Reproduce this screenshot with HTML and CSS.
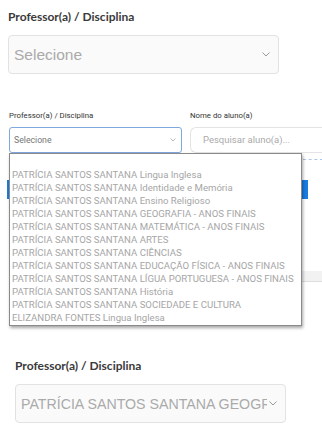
FILE: index.html
```html
<!DOCTYPE html>
<html lang="pt-BR">
<head>
    <meta charset="UTF-8">
    <title>Professor(a) / Disciplina</title>
    <link rel="stylesheet" href="styles.css">
</head>
<body>
    <div class="block big">
        <div class="label">Professor(a) / Disciplina</div>
        <div class="select">
            <span class="value placeholder">Selecione</span>
            <svg class="chev" width="8" height="5" viewBox="0 0 8 5"><polyline points="0.5,0.5 4,4 7.5,0.5" fill="none" stroke="#999" stroke-width="1"/></svg>
        </div>
    </div>

    <div class="block small">
        <div class="fields">
            <div class="field prof">
                <div class="label">Professor(a) / Disciplina</div>
                <div class="select focus">
                    <span class="value">Selecione</span>
                    <svg class="chev" width="6" height="4" viewBox="0 0 6 4"><polyline points="0.5,0.5 3,3 5.5,0.5" fill="none" stroke="#aaa" stroke-width="0.8"/></svg>
                </div>
            </div>
            <div class="field aluno">
                <div class="label">Nome do aluno(a)</div>
                <div class="search">Pesquisar aluno(a)...</div>
            </div>
        </div>
        <div class="dash"></div>
        <div class="blue-bar"></div>
        <div class="grey-row"></div>

        <div class="options">
            <div class="opt"></div>
            <div class="opt">PATRÍCIA SANTOS SANTANA Lingua Inglesa</div>
            <div class="opt">PATRÍCIA SANTOS SANTANA Identidade e Memória</div>
            <div class="opt">PATRÍCIA SANTOS SANTANA Ensino Religioso</div>
            <div class="opt">PATRÍCIA SANTOS SANTANA GEOGRAFIA - ANOS FINAIS</div>
            <div class="opt">PATRÍCIA SANTOS SANTANA MATEMÁTICA - ANOS FINAIS</div>
            <div class="opt">PATRÍCIA SANTOS SANTANA ARTES</div>
            <div class="opt">PATRÍCIA SANTOS SANTANA CIÊNCIAS</div>
            <div class="opt">PATRÍCIA SANTOS SANTANA EDUCAÇÃO FÍSICA - ANOS FINAIS</div>
            <div class="opt">PATRÍCIA SANTOS SANTANA LÍGUA PORTUGUESA - ANOS FINAIS</div>
            <div class="opt">PATRÍCIA SANTOS SANTANA História</div>
            <div class="opt">PATRÍCIA SANTOS SANTANA SOCIEDADE E CULTURA</div>
            <div class="opt">ELIZANDRA FONTES Lingua Inglesa</div>
        </div>
    </div>

    <div class="block big last">
        <div class="label">Professor(a) / Disciplina</div>
        <div class="select">
            <span class="value placeholder">PATRÍCIA SANTOS SANTANA GEOGR</span>
            <svg class="chev" width="8" height="5" viewBox="0 0 8 5"><polyline points="0.5,0.5 4,4 7.5,0.5" fill="none" stroke="#999" stroke-width="1"/></svg>
        </div>
    </div>
</body>
</html>
```

FILE: styles.css
```css
html, body {
    margin: 0;
    padding: 0;
    background-color: #fff;
}
body {
    width: 322px;
    height: 442px;
    overflow: hidden;
}
.block {
    position: relative;
}
.big {
    padding: 9px 0 0 8px;
}
.big .label {
    font-family: Lato, sans-serif;
    font-weight: 700;
    font-size: 12px;
    line-height: 16px;
    color: #3a3a3a;
    margin-bottom: 10px;
}
.big .select {
    width: 256px;
    height: 37px;
    display: flex;
    align-items: center;
    border: 1px solid #e2e2e2;
    border-radius: 4px;
    background-color: #fafafa;
    padding: 0 8px 0 5px;
}
.big .value {
    flex: 1;
    font-family: "Liberation Sans", Arial, sans-serif;
    font-size: 15.5px;
    color: #aaa;
    white-space: nowrap;
    overflow: hidden;
}
.big .chev {
    flex: none;
    margin-left: 2px;
}
.last {
    padding: 9px 0 0 15px;
}
.last .value {
    font-size: 14.2px;
}
.last .chev {
    margin-left: 2px;
}

.small {
    padding: 36px 0 0 9px;
    height: 239px;
}
.fields {
    display: flex;
    gap: 8px;
}
.small .label {
    font-family: Roboto, sans-serif;
    font-size: 7.8px;
    line-height: 12px;
    color: #333;
    margin-bottom: 5px;
}
.prof .select {
    width: 162px;
    height: 24px;
    display: flex;
    align-items: center;
    padding: 0 5px 0 4px;
    border: 1px solid #7fa7e0;
    border-radius: 3px;
    background-color: #fff;
}
.prof .value {
    flex: 1;
    font-family: Roboto, sans-serif;
    font-size: 8.7px;
    color: #777;
}
.aluno {
    flex: 1;
}
.search {
    height: 24px;
    line-height: 24px;
    padding-left: 12px;
    border: 1px solid #e4e4e4;
    border-right: none;
    border-radius: 6px 0 0 6px;
    font-family: Roboto, sans-serif;
    font-size: 9.5px;
    color: #aaa;
}
.dash {
    margin: 6px 0 0 294px;
    border-top: 1px dashed #a8c8ea;
    width: 20px;
}
.blue-bar {
    margin: 20px 0 0 -2px;
    width: 301px;
    height: 19px;
    background-color: #1a7be0;
}
.grey-row {
    margin: 72px 0 0 0;
    width: 313px;
    height: 10px;
    background-color: #f2f2f2;
    border-bottom: 1px solid #ddd;
}

.options {
    position: absolute;
    top: 79px;
    left: 9px;
    width: 291px;
    height: 170px;
    padding-top: 1px;
    background-color: #fff;
    border: 1px solid #8a8a8a;
    box-shadow: 1px 2px 3px rgba(0, 0, 0, 0.35);
}
.opt {
    height: 13px;
    line-height: 13px;
    padding-left: 2px;
    font-family: Roboto, sans-serif;
    font-size: 9.6px;
    color: #a6a6a6;
    white-space: nowrap;
}
```
